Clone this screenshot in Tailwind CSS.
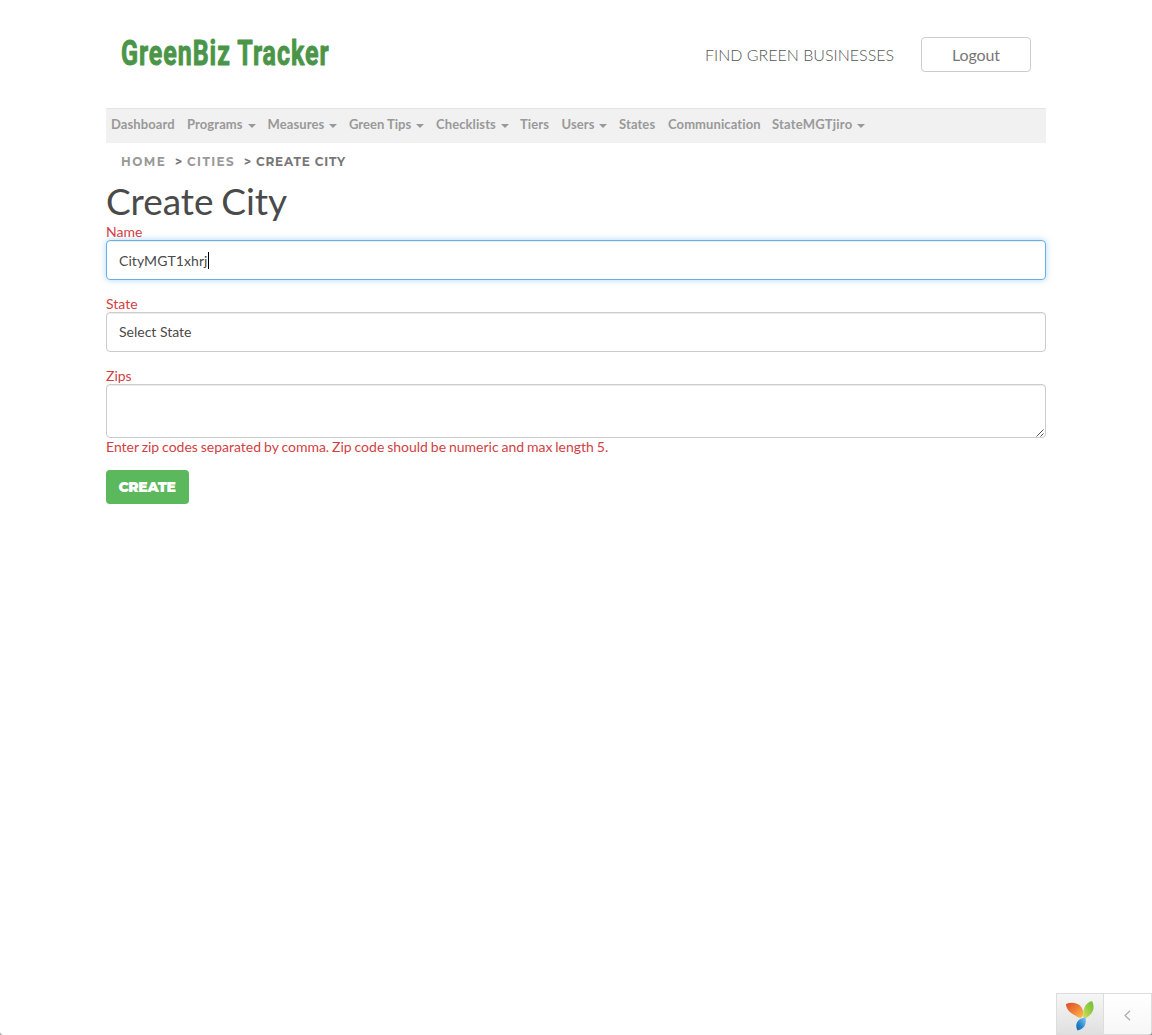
<!DOCTYPE html>
<html lang="en">
<head>
<meta charset="utf-8">
<title>Create City</title>
<script src="https://cdn.jsdelivr.net/npm/@tailwindcss/browser@4"></script>
</head>
<body class="bg-white font-['Lato',sans-serif] text-[14px] leading-4 text-[#4a4a4a]">
<div class="flex h-[1035px] flex-col overflow-hidden">
  <div class="mx-auto w-[940px]">
    <header class="flex h-[108px] items-start justify-between px-[15px]">
      <svg class="mt-[28px] overflow-visible" width="212" height="52" viewBox="0 0 212 52" role="img">
        <text x="0" y="37" textLength="208.5" lengthAdjust="spacingAndGlyphs" font-family="Roboto, sans-serif" font-weight="700" font-size="34.5" letter-spacing="1.3" fill="#4a9547" stroke="#4a9547" stroke-width="0.9" stroke-linejoin="round">GreenBiz Tracker</text>
      </svg>
      <div class="mt-[37px] flex items-center text-[16px] text-[#777]">
        <a class="mr-[27px] w-[189px] whitespace-nowrap font-light text-[#555]">FIND GREEN BUSINESSES</a>
        <a class="flex h-[35px] w-[110px] items-center justify-center rounded border border-[#ccc] pt-px tracking-[-0.1px]">Logout</a>
      </div>
    </header>
    <nav class="flex h-[35px] border-t border-[#e3e3e3] bg-[#f1f1f1] pt-[7px] pl-[5px] text-[13px] font-bold tracking-[0.1px] whitespace-nowrap text-[#999]">
      <a class="w-[76px]">Dashboard</a>
      <a class="flex w-[80.5px]">Programs<i class="mt-2 ml-[5px] h-0 w-0 border-x-4 border-t-4 border-x-transparent border-t-[#999]"></i></a>
      <a class="flex w-[81.5px]">Measures<i class="mt-2 ml-[5px] h-0 w-0 border-x-4 border-t-4 border-x-transparent border-t-[#999]"></i></a>
      <a class="flex w-[87px] tracking-normal">Green Tips<i class="mt-2 ml-[5px] h-0 w-0 border-x-4 border-t-4 border-x-transparent border-t-[#999]"></i></a>
      <a class="flex w-[84px]">Checklists<i class="mt-2 ml-[5px] h-0 w-0 border-x-4 border-t-4 border-x-transparent border-t-[#999]"></i></a>
      <a class="w-[41.5px]">Tiers</a>
      <a class="flex w-[57.5px]">Users<i class="mt-2 ml-[4px] h-0 w-0 border-x-4 border-t-4 border-x-transparent border-t-[#999]"></i></a>
      <a class="w-[49px]">States</a>
      <a class="w-[104px]">Communication</a>
      <a class="flex tracking-[0.2px]">StateMGTjiro<i class="mt-2 ml-[5px] h-0 w-0 border-x-4 border-t-4 border-x-transparent border-t-[#999]"></i></a>
    </nav>
    <div class="flex h-[37px] pt-[11px] pl-[15px] font-['Montserrat','Inter',sans-serif] text-[12px] font-bold whitespace-nowrap text-[#999]">
      <span class="w-[54px] tracking-[1.5px]">HOME</span><span class="w-[12px] text-[#777]">&gt;</span><span class="w-[57px] tracking-[1.4px]">CITIES</span><span class="w-[12px] text-[#777]">&gt;</span><span class="tracking-[0.8px] text-[#777]">CREATE CITY</span>
    </div>
    <h1 class="h-[44px] text-[37px] leading-[41px] tracking-[-0.05px] [word-spacing:-1.5px]">Create City</h1>
    <form>
      <label class="block h-4 text-[#d13f44]">Name</label>
      <div class="flex h-10 items-center rounded border border-[#66afe9] pt-px pl-3 tracking-[0.08px] shadow-[inset_0_1px_1px_rgba(0,0,0,0.075),0_0_6px_rgba(102,175,233,0.5)]">CityMGT1xhrj<i class="h-[17px] w-px bg-black"></i></div>
      <label class="mt-4 block h-4 text-[#d13f44]">State</label>
      <div class="flex h-10 items-center rounded border border-[#ccc] pl-3 shadow-[inset_0_1px_1px_rgba(0,0,0,0.075)]">Select State</div>
      <label class="mt-4 block h-4 text-[#d13f44]">Zips</label>
      <div class="flex h-[54px] items-end justify-end rounded border border-[#ccc] shadow-[inset_0_1px_1px_rgba(0,0,0,0.075)]">
        <svg class="mr-px" width="8" height="8" viewBox="0 0 8 8" stroke="#555" stroke-width="1"><path d="M.5 7.5l7-7M4.5 7.5l3-3"/></svg>
      </div>
      <p class="mt-px h-[31px] whitespace-nowrap text-[#d13f44] [word-spacing:-0.7px]">Enter zip codes separated by comma. Zip code should be numeric and max length 5.</p>
      <div class="flex h-[34px] w-[83px] items-center justify-center rounded bg-[#5cb85c] pr-px font-['Montserrat','Inter',sans-serif] text-[14px] font-black tracking-[-0.4px] text-white">CREATE</div>
    </form>
  </div>
  <div class="mt-auto flex items-end justify-between">
    <svg width="4" height="4" viewBox="0 0 4 4"><path d="M0 0Q0 4 4 4H0z" fill="#aaa"/></svg>
    <div class="flex h-[42px] w-24 border-t border-l border-[#ddd]">
      <div class="flex w-[46px] shrink-0 justify-center border-b border-[#ddd] bg-linear-to-b from-[#f6f6f6] to-[#e0e0e0] pt-[6px]">
        <svg width="30" height="32" viewBox="0 0 30 32">
          <defs>
            <linearGradient id="r" x1="0" y1="0" x2="1" y2="1"><stop stop-color="#dd4b2c"/><stop offset=".5" stop-color="#ee8036"/><stop offset="1" stop-color="#ffc34d"/></linearGradient>
            <linearGradient id="g" x1="0" y1="1" x2="1" y2="0"><stop stop-color="#d9df63"/><stop offset=".6" stop-color="#8fca3f"/><stop offset="1" stop-color="#6ebc3c"/></linearGradient>
            <linearGradient id="b" x1="1" y1="0" x2="0" y2="1"><stop stop-color="#85c9f3"/><stop offset=".6" stop-color="#2484cb"/><stop offset="1" stop-color="#1262ae"/></linearGradient>
          </defs>
          <path d="M1 4C8 1 18 3 18.5 14C17.5 18 15 19 11 16C5 13 1 9 1 4z" fill="url(#r)"/>
          <path d="M27 1C31 9 27 16 18.5 19C17.5 11 19 3 27 1z" fill="url(#g)"/>
          <path d="M20.5 17.5C22 24 19 29 12.5 30.5C9 24 13 18 20.5 17.5z" fill="url(#b)"/>
        </svg>
      </div>
      <div class="relative flex grow items-center justify-center border-r border-b border-l border-[#ddd] bg-linear-to-b from-white to-[#f7f7f7] pt-[3px] pr-px">
        <svg width="7" height="11" viewBox="0 0 7 11" fill="none" stroke="#aaa" stroke-width="1.2"><path d="M6 .8L1 5.5l5 4.7"/></svg>
        <svg class="absolute -right-px -bottom-px" width="4" height="4" viewBox="0 0 4 4"><path d="M4 0Q4 4 0 4H4z" fill="#999"/></svg>
      </div>
    </div>
  </div>
</div>
</body>
</html>
